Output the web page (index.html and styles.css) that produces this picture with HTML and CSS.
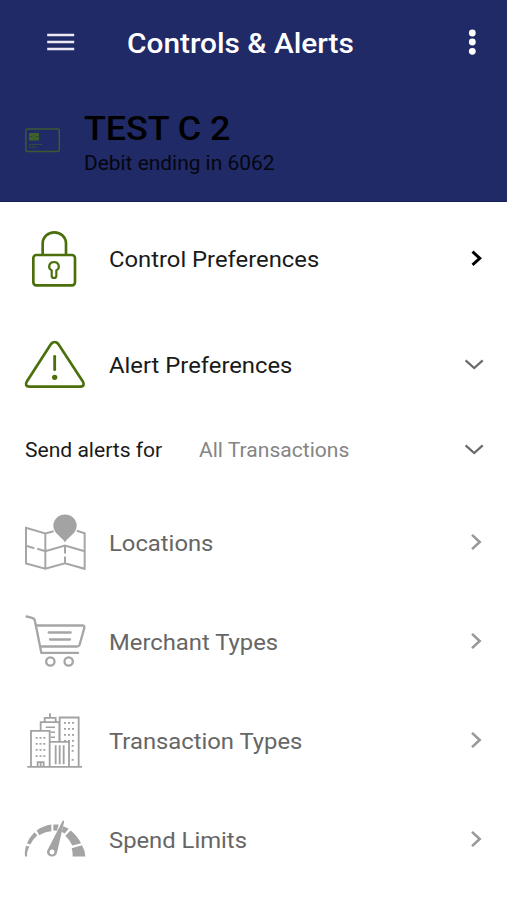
FILE: index.html
```html
<!DOCTYPE html>
<html lang="en">
<head>
<meta charset="utf-8">
<title>Controls &amp; Alerts</title>
<link rel="stylesheet" href="styles.css">
</head>
<body>
<header class="header">
  <div class="bar">
    <svg class="menu" viewBox="0 0 28 18"><path d="M.2 2h27M.2 9h27M.2 16h27" stroke="#ece9f5" stroke-width="2.400"/></svg>
    <h1 class="title">Controls &amp; Alerts</h1>
    <svg class="more" viewBox="0 0 8 26"><g fill="#fff"><circle cx="4.300" cy="4" r="3.400"/><circle cx="4.300" cy="13" r="3.400"/><circle cx="4.300" cy="22.300" r="3.400"/></g></svg>
  </div>
  <div class="account">
    <svg class="card" viewBox="0 0 36 25"><rect x=".8" y="1" width="33.500" height="22.500" rx="1.500" fill="none" stroke="#3a5a32" stroke-width="1.500"/><rect x="4" y="5" width="10" height="7.500" rx="1" fill="#3f6426"/><path d="M4.500 8.700h3m3 0h3M9 6v1.500m0 2.500v1.500" stroke="#24315a" stroke-width=".7"/><path d="M4 16.500h13M4 19h8" stroke="#35552f" stroke-width="1" stroke-dasharray="2.200 .5"/></svg>
    <div class="account-text">
      <h2 class="name">TEST C 2</h2>
      <p class="ending">Debit ending in 6062</p>
    </div>
  </div>
</header>
<main>
  <div class="row control">
    <svg class="icon" viewBox="14 2 240 228"><g fill="none" stroke="#4b700b" stroke-width="8"><path d="M97 103V69a35 33 0 0 1 70 0v34"/><rect x="69" y="104" width="125" height="91" rx="9"/><path stroke-width="6.500" d="M124 150c-13-7-8-25 7-25s20 18 7 25v16c0 9-14 9-14 0z"/></g></svg>
    <span class="label">Control Preferences</span>
    <svg class="chev" viewBox="0 0 20 20"><path d="M7.500 2.700 14.800 9.300 7.500 15.900" stroke="#000" stroke-width="2.900"/></svg>
  </div>
  <div class="row alert">
    <svg class="icon" viewBox="15 319 240 228"><path d="M123 370 51 482c-6 9-3 16 7 16H211c10 0 13-7 7-16L145 370c-7-8-15-8-22 0z" fill="none" stroke="#4b700b" stroke-width="8"/><path d="M134 407v40" stroke="#4b700b" stroke-width="8.500" stroke-linecap="round"/><circle cx="134" cy="470" r="8" fill="#4b700b"/></svg>
    <span class="label">Alert Preferences</span>
    <svg class="chev" viewBox="0 0 20 20"><path d="M.6 5.400 9.200 13 17.700 5.400" stroke="#6a6a6a" stroke-width="2.200"/></svg>
  </div>
  <div class="row send">
    <span class="send-label"><span class="wide">Send alerts for</span></span>
    <span class="send-value"><span class="wide">All Transactions</span></span>
    <svg class="chev" viewBox="0 0 20 20"><path d="M.6 5.400 9.200 13 17.700 5.400" stroke="#6a6a6a" stroke-width="2.200"/></svg>
  </div>
  <div class="row item">
    <svg class="icon" viewBox="-1 -1.500 240 225"><g fill="none" stroke="#a6a6a6" stroke-width="6"><path d="M115 77 90 84 32 67v107l58 16 59-17 59 17V83l-24-7M90 84v106M149 120v24M149 153v20M32 121l25 7M66 130l24 7 59-17 59 17"/></g><path d="M149 111c-8-16-35-26-35-50a35 34 0 0 1 70 0c0 24-27 34-35 50z" fill="#a3a3a3"/></svg>
    <span class="label">Locations</span>
    <svg class="chev" viewBox="0 0 20 20"><path d="M7 1.900 14.700 9 7 16.100" stroke="#999" stroke-width="2.600"/></svg>
  </div>
  <div class="row item">
    <svg class="icon" viewBox="-1 -4.500 240 225"><g fill="none" stroke="#a6a6a6" stroke-width="7" stroke-linecap="round" stroke-linejoin="round"><path d="M34 33l16 4q8 2 9 10l19 95H188M63 60H201q7 0 6 7l-14 50q-2 6-8 6H76M100 81h66M104 102h60"/><circle cx="105" cy="168" r="12.500"/><circle cx="160" cy="168" r="12.500"/></g></svg>
    <span class="label">Merchant Types</span>
    <svg class="chev" viewBox="0 0 20 20"><path d="M7 1.900 14.700 9 7 16.100" stroke="#999" stroke-width="2.600"/></svg>
  </div>
  <div class="row item">
    <svg class="icon" viewBox="-1 -7.500 240 225"><g fill="none" stroke="#a2a2a2" stroke-width="5.500"><path d="M36 184H200M47 184V76h56v108M76 74V50h56v58M88 49V37h33v12M104 37V23M133 108V36h57v148M105 109h56v75"/><path d="M121 119v57M133 119v57M145 119v57"/><path d="M91 65h28M106 80h13M106 95h13" stroke-width="4.500"/><path d="M61 97h32M61 115h32M61 133h32M61 152h32" stroke-dasharray="6 5.500"/><path d="M146 52h32M146 70h32M146 88h32M146 106h32M169 121h9M169 136h9M169 163h9" stroke-dasharray="6 6"/><path d="M67 183v-13h18v13M76 170v13"/></g></svg>
    <span class="label">Transaction Types</span>
    <svg class="chev" viewBox="0 0 20 20"><path d="M7 1.900 14.700 9 7 16.100" stroke="#999" stroke-width="2.600"/></svg>
  </div>
  <div class="row item">
    <svg class="icon" viewBox="-1 -10.500 240 225"><g fill="#a4a4a4"><path d="M29 153c-1-12 0-21 3-32l10 2c-5 10-7 19-7 30zM35 113q7-17 22-33l9 9q-14 13-21 28zM64 75q18-14 44-18v20q-20 1-36 12zM114 57h16l-5 19-11-1zM144 62q9 3 16 8l-12 14-9-5zM166 75q20 16 31 38l-26 7q-8-17-21-29zM200 119q9 15 10 34h-38q1-13-3-25z"/><path fill-rule="evenodd" d="M142 46q6-3 4 4l-21 91c-2 17-30 16-30-2q0-4 4-10zM110 132a7.500 7.500 0 1 0 .1 0z"/></g></svg>
    <span class="label">Spend Limits</span>
    <svg class="chev" viewBox="0 0 20 20"><path d="M7 1.900 14.700 9 7 16.100" stroke="#999" stroke-width="2.600"/></svg>
  </div>
</main>
</body>
</html>
```
FILE: styles.css
```css
* { box-sizing: border-box; }
body { margin: 0; background: #fff; font-family: Roboto, "Liberation Sans", sans-serif; color: #1a1a1a; overflow-x: hidden; }
h1, h2, p { margin: 0; font-weight: 400; }
svg { display: block; flex: none; }
.header { height: 202px; background: #202a66; border-bottom: 1px solid #171f57; }
.bar { height: 86px; display: flex; align-items: center; padding: 0 31px 0 47px; }
.menu { width: 28px; height: 18px; margin-top: -2px; }
.title { flex: 1; margin-left: 52px; padding-top: 1px; font-size: 28px; line-height: 36px; font-weight: 500; color: #fff; white-space: nowrap; transform: scaleX(1.065); transform-origin: left; }
.more { width: 8px; height: 26px; margin-top: -2px; }
.account { display: flex; padding: 23px 0 0 25px; color: #05060f; }
.card { width: 36px; height: 25px; margin-top: 19px; }
.account-text { margin-left: 23px; white-space: nowrap; }
.name { font-size: 34px; line-height: 38px; font-weight: 500; color: #000; transform: scaleX(1.055); transform-origin: left; }
.ending { font-size: 19.5px; line-height: 28px; margin-top: 3px; transform: scaleX(1.072); transform-origin: left; }
.row { display: flex; align-items: center; padding: 0 22px 0 15px; white-space: nowrap; }
.control { height: 114px; }
.alert { height: 98px; }
.send { height: 72px; margin-bottom: 7px; padding-left: 25px; }
.item { height: 99px; color: #666; }
.icon { width: 80px; height: 76px; }
.item .icon { height: 75px; }
.label { flex: 1; margin-left: 14px; padding-top: 2px; font-size: 22px; line-height: 28px; transform: scaleX(1.082); transform-origin: left; }
.item .label { padding-top: 3px; }
.send-label { width: 174px; font-size: 19.5px; }
.send-value { flex: 1; font-size: 19.5px; color: #858585; }
.wide { display: inline-block; transform: scaleX(1.08); transform-origin: left; }
.chev { width: 20px; height: 20px; overflow: visible; fill: none; }
```
